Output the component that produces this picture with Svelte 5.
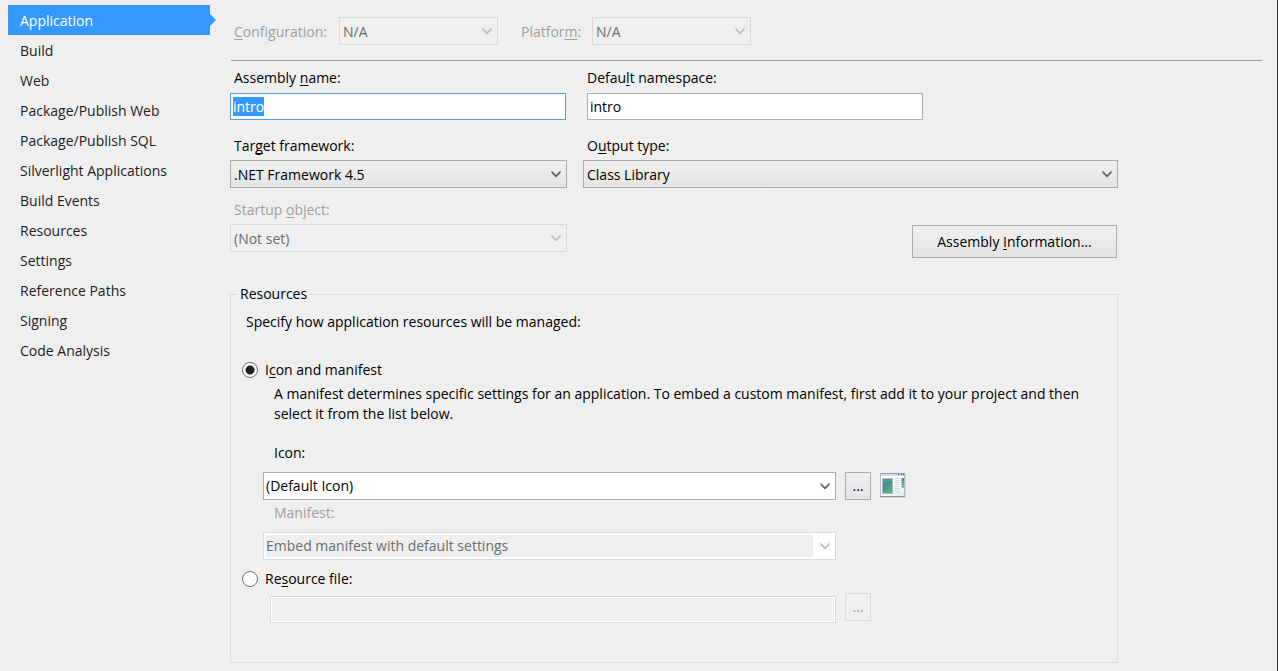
<script>
  import { onMount } from 'svelte';

  const pages = [
    'Application', 'Build', 'Web', 'Package/Publish Web', 'Package/Publish SQL',
    'Silverlight Applications', 'Build Events', 'Resources', 'Settings',
    'Reference Paths', 'Signing', 'Code Analysis'
  ];
  let current = $state('Application');
  let assemblyName = $state('intro');
  let namespaceName = $state('intro');
  let resourceMode = $state('icon');
  let nameInput;

  onMount(() => {
    nameInput.focus();
    nameInput.select();
  });
</script>

{#snippet combo(id, text, disabled = false, kind = 'button')}
  <div class="combo {kind}" class:disabled>
    <select {id} {disabled}><option>{text}</option></select>
    <svg class="chevron" viewBox="0 0 10 8" aria-hidden="true">
      <path d="M0.5 0.5 5 5 9.5 0.5V3L5 7.5 0.5 3Z" />
    </svg>
  </div>
{/snippet}

<div class="designer">
  <nav>
    {#each pages as page}
      <button class="tab" class:active={page === current} onclick={() => (current = page)}>{page}</button>
    {/each}
  </nav>

  <main>
    <div class="config">
      <label class="dim" for="configuration"><u>C</u>onfiguration:</label>
      {@render combo('configuration', 'N/A', true)}
      <label class="dim" for="platform">Platfor<u>m</u>:</label>
      {@render combo('platform', 'N/A', true)}
    </div>

    <div class="form">
      <div class="columns">
        <div class="field names">
          <label for="assembly">Assembly <u>n</u>ame:</label>
          <input id="assembly" class="text focused" type="text" bind:this={nameInput} bind:value={assemblyName} />
        </div>
        <div class="field names">
          <label for="namespace">Defau<u>l</u>t namespace:</label>
          <input id="namespace" class="text second" type="text" bind:value={namespaceName} />
        </div>
      </div>

      <div class="columns frameworks">
        <div class="field">
          <label for="framework">Tar<u>g</u>et framework:</label>
          {@render combo('framework', '.NET Framework 4.5')}
        </div>
        <div class="field">
          <label for="output">O<u>u</u>tput type:</label>
          {@render combo('output', 'Class Library')}
        </div>
      </div>

      <div class="columns startup">
        <div class="field">
          <label class="dim" for="startup">Startup <u>o</u>bject:</label>
          {@render combo('startup', '(Not set)', true)}
        </div>
        <button class="push info">Assembly <u>I</u>nformation...</button>
      </div>

      <fieldset>
        <legend>Resources</legend>
        <p class="intro">Specify how application resources will be managed:</p>

        <label class="radio">
          <input type="radio" name="resources" value="icon" bind:group={resourceMode} />
          <span>I<u>c</u>on and manifest</span>
        </label>
        <p class="help">
          A manifest determines specific settings for an application. To embed a custom manifest, first add it to your project and then select it from the list below.
        </p>

        <label class="sub" for="icon">Icon:</label>
        <div class="picker">
          {@render combo('icon', '(Default Icon)', false, 'editable')}
          <button class="push more" aria-label="Browse for icon">...</button>
          <svg class="preview" viewBox="0 0 27 26" aria-hidden="true">
            <defs>
              <linearGradient id="pane" x1="0" y1="0" x2="0.5" y2="1">
                <stop offset="0" stop-color="#3f79a6" />
                <stop offset="0.5" stop-color="#43918f" />
                <stop offset="1" stop-color="#5fb073" />
              </linearGradient>
              <linearGradient id="side" x1="0" y1="0" x2="0" y2="1">
                <stop offset="0" stop-color="#4778b5" />
                <stop offset="1" stop-color="#7fd08d" />
              </linearGradient>
              <linearGradient id="sheet" x1="0" y1="0" x2="1" y2="1">
                <stop offset="0.4" stop-color="#ffffff" />
                <stop offset="1" stop-color="#e3e8ee" />
              </linearGradient>
            </defs>
            <path d="M1 1H26V25H1Z" fill="#d2d4d8" />
            <path d="M0 0H25V24H0Z" fill="#b4bac6" />
            <path d="M1 3H24V23H1Z" fill="url(#sheet)" />
            <path d="M0 0H25V1H0Z" fill="#959aa6" />
            <path d="M1 1H24V3H1Z" fill="#d5d9e5" />
            <path d="M18 1H19V2H18ZM21 1H22V2H21ZM23 1H24V2H23Z" fill="#555d70" />
            <path d="M0 23H25V24H0Z" fill="#9197a2" />
            <path d="M2 5H13V21H2Z" fill="#a6b7c5" />
            <path d="M3 6H12V20H3Z" fill="url(#pane)" />
            <path d="M3 6H12V8Q8 8 3 12Z" fill="#ffffff" opacity="0.12" />
            <path d="M14 5H19V6H14ZM15 7H20V8H15ZM14 9H19V10H14ZM15 11H20V12H15ZM14 13H19V14H14ZM15 15H20V16H15ZM14 17H19V18H14ZM15 19H20V20H15Z" fill="#d6d7da" />
            <path d="M21 5H24V15H21Z" fill="url(#side)" />
            <path d="M21 5H22V15H21Z" fill="#ffffff" opacity="0.5" />
          </svg>
        </div>

        <label class="sub dim manifest" for="manifest">Manifest:</label>
        <div class="picker">
          {@render combo('manifest', 'Embed manifest with default settings', true, 'editable')}
        </div>

        <label class="radio second-choice">
          <input type="radio" name="resources" value="file" bind:group={resourceMode} />
          <span>Re<u>s</u>ource file:</span>
        </label>
        <div class="picker file">
          <input class="text" type="text" aria-label="Resource file" disabled />
          <button class="push more" aria-label="Browse for resource file" disabled>...</button>
        </div>
      </fieldset>
    </div>
  </main>
</div>

<style>
  :global(body) {
    background: #efefef;
  }

  .designer {
    box-sizing: border-box;
    display: grid;
    grid-template-columns: 202px 1fr;
    gap: 20px;
    min-height: 100vh;
    padding: 5px 15px 8px 8px;
    border-right: 1px solid #2d2d30;
    font: 14px/20px "Open Sans", "Noto Sans", sans-serif;
    color: #000;
  }

  .designer :is(button, input, select) {
    box-sizing: border-box;
    margin: 0;
    font: inherit;
    color: inherit;
    border-radius: 0;
    outline: none;
  }

  u {
    text-decoration-thickness: 1px;
    text-underline-offset: 2px;
    text-decoration-skip-ink: none;
  }

  nav {
    display: flex;
    flex-direction: column;
  }

  nav .tab {
    position: relative;
    height: 30px;
    padding: 2px 12px 0;
    border: 0;
    background: none;
    color: #1e1e1e;
    text-align: left;
  }

  nav .tab.active {
    background: #3399ff;
    color: #fff;
  }

  nav .tab.active::after {
    content: "";
    position: absolute;
    left: 100%;
    top: 9px;
    border: 6px solid transparent;
    border-left-color: #3399ff;
    border-right-width: 0;
  }

  .config {
    display: grid;
    grid-template-columns: 105px 159px 94px 159px;
    align-items: center;
    margin-left: 1px;
    padding: 12px 0 15px 3px;
    border-bottom: 1px solid #a0a0a0;
  }

  .config label {
    padding-top: 2px;
  }

  .config label:nth-of-type(2) {
    padding-left: 23px;
  }

  .dim {
    color: #a0a0a0;
  }

  .form {
    margin-right: 144px;
    padding-top: 7px;
  }

  .columns {
    display: grid;
    grid-template-columns: 337fr 535fr;
    gap: 16px;
  }

  .frameworks {
    margin-top: 16px;
  }

  .startup {
    margin-top: 12px;
  }

  .field {
    display: flex;
    flex-direction: column;
    gap: 4px;
  }

  .names {
    gap: 5px;
  }

  .field label {
    padding-left: 4px;
  }

  .text {
    height: 27px;
    padding: 0 2px;
    border: 1px solid #abadb3;
    background: #fff;
  }

  .focused {
    margin-right: 1px !important;
    border-color: #569de5;
  }

  .text::selection {
    background: rgba(51, 153, 255, 0.99);
    color: #fff;
  }

  .field .second {
    width: 336px;
    max-width: 100%;
    margin-left: 4px;
  }

  .combo {
    display: grid;
    height: 28px;
  }

  .combo select,
  .combo .chevron {
    grid-area: 1 / 1;
  }

  .combo select {
    appearance: none;
    width: 100%;
    padding: 2px 24px 0 3px;
    border: 1px solid #acacac;
    background: linear-gradient(#f0f0f0, #e4e4e4);
  }

  .combo .chevron {
    align-self: center;
    justify-self: end;
    width: 10px;
    height: 8px;
    margin-right: 6px;
    fill: #606060;
    pointer-events: none;
  }

  .combo.disabled select {
    border-color: #d9d9d9;
    background: #efefef;
    color: #6d6d6d;
    opacity: 1;
  }

  .combo.disabled .chevron {
    fill: #bfbfbf;
  }

  .combo.editable select {
    padding: 0 22px 0 2px;
    background: #fff;
  }

  .combo.editable.disabled select {
    background: linear-gradient(#efefef, #efefef) 2px 2px / calc(100% - 24px) calc(100% - 4px) no-repeat #fff;
  }

  .push {
    border: 1px solid #acacac;
    background: linear-gradient(#f0f0f0, #e4e4e4);
  }

  .push:disabled {
    border-color: #d9d9d9;
    background: #efefef;
    color: #a0a0a0;
  }

  .info {
    align-self: start;
    justify-self: end;
    width: 205px;
    height: 33px;
    margin: 25px 1px 0 0 !important;
  }

  fieldset {
    min-width: 0;
    margin: 32px 0 0;
    padding: 8px 16px 39px 15px;
    border: 1px solid #dcdcdc;
  }

  legend {
    margin-left: -9px;
    padding: 0 3px;
  }

  p {
    margin: 0;
  }

  .radio {
    display: flex;
    align-items: center;
    gap: 7px;
    margin: 28px 0 0 -4px;
  }

  .radio.second-choice {
    margin-top: 9px;
  }

  .designer .radio input {
    appearance: none;
    width: 16px;
    height: 16px;
    border: 1px solid #707070;
    border-radius: 50%;
    background: #fff;
  }

  .designer .radio input:checked {
    background: radial-gradient(circle, #212121 4px, #fff 5px);
  }

  .help {
    margin: 4px 0 0 28px;
  }

  .sub {
    display: block;
    margin: 19px 0 9px 28px;
  }

  .sub.manifest {
    margin-top: 3px;
  }

  .picker {
    display: grid;
    grid-template-columns: 1fr 26px 27px;
    align-items: center;
    column-gap: 9px;
    margin: 0 194px 0 17px;
  }

  .more {
    height: 28px;
    padding: 0;
  }

  .preview {
    width: 27px;
    height: 26px;
  }

  .file {
    align-items: start;
    margin-top: 4px;
  }

  .designer .file .text {
    margin: 3px 0 0 7px;
    border-color: #d9d9d9;
    background: #efefef;
    box-shadow: inset 0 0 0 1px #fff;
  }

  .startup + fieldset {
    margin-top: 26px;
  }
</style>
